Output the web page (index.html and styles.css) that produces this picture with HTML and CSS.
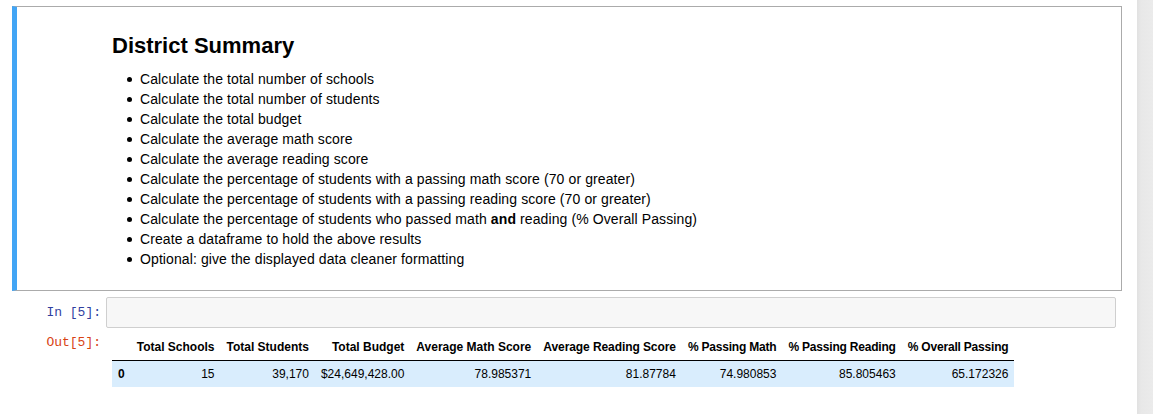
FILE: index.html
```html
<!DOCTYPE html>
<html>
<head>
<meta charset="utf-8">
<link rel="stylesheet" href="styles.css">
</head>
<body>
<div class="page">
  <div class="notebook">
    <div class="md-cell">
      <h2 class="md-title">District Summary</h2>
      <ul class="md-list">
        <li>Calculate the total number of schools</li>
        <li>Calculate the total number of students</li>
        <li>Calculate the total budget</li>
        <li>Calculate the average math score</li>
        <li>Calculate the average reading score</li>
        <li>Calculate the percentage of students with a passing math score (70 or greater)</li>
        <li>Calculate the percentage of students with a passing reading score (70 or greater)</li>
        <li>Calculate the percentage of students who passed math <b>and</b> reading (% Overall Passing)</li>
        <li>Create a dataframe to hold the above results</li>
        <li>Optional: give the displayed data cleaner formatting</li>
      </ul>
    </div>
    <div class="code-cell">
      <div class="row">
        <div class="prompt prompt-in">In&nbsp;[5]:</div>
        <div class="input-box"></div>
      </div>
      <div class="row">
        <div class="prompt prompt-out">Out[5]:</div>
        <div class="output">
          <table class="df">
            <thead>
              <tr>
                <th></th>
                <th>Total Schools</th>
                <th>Total Students</th>
                <th>Total Budget</th>
                <th>Average Math Score</th>
                <th class="tight-s">Average Reading Score</th>
                <th class="tight">% Passing Math</th>
                <th class="tight">% Passing Reading</th>
                <th class="tight">% Overall Passing</th>
              </tr>
            </thead>
            <tbody>
              <tr>
                <th class="idx">0</th>
                <td>15</td>
                <td>39,170</td>
                <td>$24,649,428.00</td>
                <td>78.985371</td>
                <td>81.87784</td>
                <td>74.980853</td>
                <td>85.805463</td>
                <td>65.172326</td>
              </tr>
            </tbody>
          </table>
        </div>
      </div>
    </div>
  </div>
  <div class="scrollbar"></div>
</div>
</body>
</html>
```

FILE: styles.css
```css
html, body {
  margin: 0;
  padding: 0;
  background: #fff;
}
body {
  font-family: "Liberation Sans", Arial, sans-serif;
  color: #000;
}
.page {
  display: flex;
  height: 414px;
  overflow: hidden;
}
.notebook {
  width: 1137px;
  box-sizing: border-box;
  padding: 6px 0 0 12px;
}
.scrollbar {
  width: 16px;
  flex: 0 0 16px;
  background: linear-gradient(to right, #e1e1e1 0px, #e8e8e8 4px, #ebebeb 16px);
}
.md-cell {
  width: 1110px;
  box-sizing: border-box;
  border: 1px solid #ababab;
  border-left: 5px solid #42a5f5;
  padding: 27px 0 21px 95px;
}
.md-title {
  margin: 0 0 12px 0;
  font-size: 22px;
  line-height: 23px;
  font-weight: bold;
}
.md-list {
  margin: 0;
  padding-left: 28px;
  font-size: 14px;
  line-height: 20px;
  letter-spacing: 0.1px;
  list-style: none;
}
.md-list li::before {
  content: "";
  display: inline-block;
  width: 5px;
  height: 5px;
  border-radius: 50%;
  background: #000;
  margin-left: -13px;
  margin-right: 8px;
  vertical-align: 2px;
}
.code-cell {
  margin-top: 6px;
  width: 1110px;
}
.row {
  display: flex;
}
.prompt {
  width: 94px;
  flex: 0 0 94px;
  box-sizing: border-box;
  text-align: right;
  padding-right: 5px;
  font-family: "Liberation Mono", "DejaVu Sans Mono", monospace;
  font-size: 13px;
  line-height: 17px;
}
.prompt-in {
  color: #303f9f;
  padding-top: 7px;
}
.prompt-out {
  color: #d84315;
  padding-top: 6px;
}
.input-box {
  width: 1010px;
  height: 31px;
  box-sizing: border-box;
  background: #f7f7f7;
  border: 1px solid #cfcfcf;
  border-radius: 2px;
}
.output {
  padding: 6px 0 0 6px;
}
.df {
  border-collapse: collapse;
  border-spacing: 0;
  font-size: 12px;
  line-height: 14px;
}
.df th, .df td {
  padding: 6px;
  text-align: right;
  white-space: nowrap;
  vertical-align: middle;
}
.df thead th {
  font-weight: bold;
  border-bottom: 1px solid #000;
}
.df thead th.tight {
  letter-spacing: -0.2px;
}
.df thead th.tight-s {
  letter-spacing: -0.08px;
}
.df tbody tr {
  background: #d9edfd;
}
.df th.idx {
  text-align: left;
  font-weight: bold;
}
```
